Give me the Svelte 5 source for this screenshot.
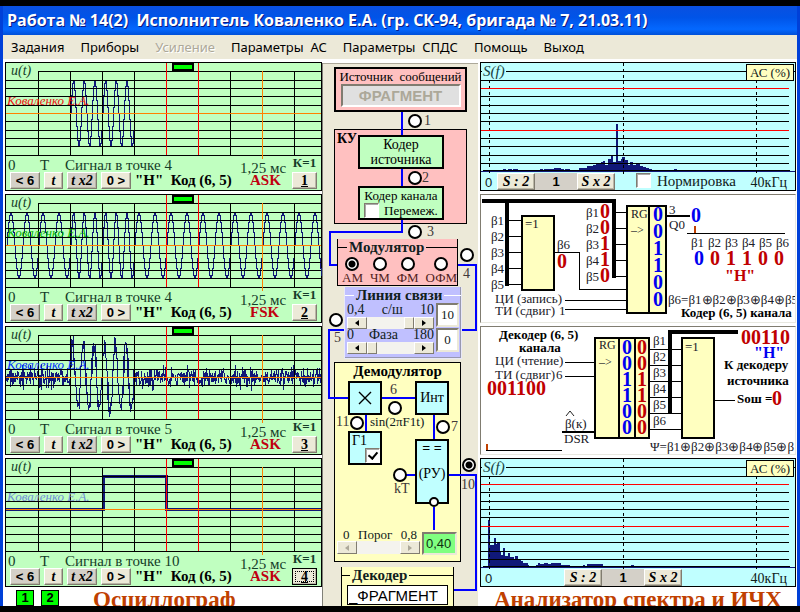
<script>
  const menu = [
    { label: 'Задания' },
    { label: 'Приборы' },
    { label: 'Усиление', disabled: true },
    { label: 'Параметры  АС' },
    { label: 'Параметры  СПДС' },
    { label: 'Помощь' },
    { label: 'Выход' }
  ];

  const PLOT_W = 315;
  const ZERO = 50;
  const AMP = 33;
  const SLOT = 32;

  let seed = 7;
  function random() {
    seed = (seed * 16807) % 2147483647;
    return seed / 2147483647;
  }
  function noise() {
    return (random() + random() + random() - 1.5) * 10;
  }

  // Cycles per bit slot: bits 2 and 3 are ones.
  function sine(x, low) {
    const slot = Math.floor(x / SLOT);
    const cycles = slot === 2 || slot === 3 ? 3 : low;
    return AMP * Math.sin((2 * Math.PI * cycles * (x % SLOT)) / SLOT);
  }

  function trace(from, to, fn) {
    let d = '';
    for (let x = from; x <= to; x += 1) {
      const y = Math.round(ZERO - fn(x)) + 0.5;
      d += d ? `H${x + 0.5}V${y}` : `M${x + 0.5} ${y}`;
    }
    return d;
  }

  // Every column spans the extremes of its own samples, as on a real screen.
  function noisyTrace() {
    let d = '';
    for (let x = 0; x < PLOT_W; x += 1) {
      const base = ZERO - sine(x, 0);
      const a = Math.round(base - noise()) + 0.5;
      const b = Math.round(ZERO - sine(x + 1, 0) + noise()) + 0.5;
      d += `${d ? 'L' : 'M'}${x + 0.5} ${a}V${b}`;
    }
    return d;
  }

  const scopes = [
    { id: 1, point: '4', mode: 'ASK', color: '#f01010', path: trace(64, 128, (x) => sine(Math.min(x, 127.9), 0)) },
    { id: 2, point: '4', mode: 'FSK', color: '#00b400', path: trace(0, PLOT_W, (x) => sine(x, 2)) },
    { id: 3, point: '5', mode: 'ASK', color: '#0030ff', path: noisyTrace() },
    { id: 4, point: '10', mode: 'ASK', color: '#7090d8', path: 'M0 50.5H97.5V17.5H160.5V50.5H315', wide: true, focused: true }
  ];

  const rows = [17, 25, 33, 42, 58, 67, 75, 83, 92];
  const cols = [32, 64, 96, 128, 224, 288];

  const specLines = [17, 33, 42, 50, 58, 75, 83, 92, 100];
  const spectra = [
    {
      id: 'a', start: 12, norm: true,
      bars: [[22, 1, 3], [27, 1, 4], [32, 1, 5], [59, 1, 3], [63, 1, 10], [73, 2, 4], [77, 2, 3], [80, 1, 3], [84, 1, 5], [98, 2, 3], [101, 2, 5], [106, 4, 3], [109, 4, 3], [112, 5, 3], [115, 6, 3], [118, 7, 2], [120, 8, 2], [122, 9, 2], [124, 5, 3], [127, 11, 3], [130, 14, 2], [132, 8, 3], [137, 9, 3], [140, 11, 2], [141, 13, 3], [144, 10, 3], [147, 5, 2], [149, 8, 3], [152, 5, 3], [155, 6, 4], [159, 4, 3], [162, 3, 3], [165, 2, 3], [168, 1, 3], [193, 1, 3], [135, 46, 2]]
    },
    {
      id: 'b', start: 79, norm: false,
      bars: [[7, 46, 2], [9, 21, 4], [13, 28, 2], [15, 22, 1], [16, 24, 3], [19, 15, 1], [20, 11, 2], [22, 18, 2], [24, 10, 3], [27, 13, 2], [29, 9, 2], [31, 9, 2], [33, 6, 1], [34, 10, 3], [37, 6, 3], [40, 5, 2], [42, 3, 5], [47, 1, 1], [55, 1, 2], [57, 3, 2], [59, 2, 4], [63, 3, 4], [67, 2, 3], [70, 3, 10], [80, 1, 9], [102, 1, 2], [106, 2, 16], [150, 1, 3]]
    }
  ];

  // Control points of the block diagram: circle centre and caption anchor.
  const points = [
    { n: '1', x: 92, y: 58, lx: 101, ly: 50 },
    { n: '2', x: 92, y: 115, lx: 99, ly: 107 },
    { n: '3', x: 92, y: 169, lx: 104, ly: 161 },
    { n: '4', x: 144, y: 192, lx: 140, ly: 203 },
    { n: '5', x: 13, y: 257, lx: 11, ly: 267 },
    { n: '6', x: 72, y: 345, lx: 67, ly: 319 },
    { n: '7', x: 120, y: 364, lx: 128, ly: 356 },
    { n: '11', x: 34, y: 360, lx: 13, ly: 351 },
    { n: 'kT', x: 77, y: 412, lx: 71, ly: 418 },
    { n: '10', x: 146, y: 402, lx: 138, ly: 414 }
  ];
  let point = $state('10');
  let modulation = $state('АМ');
  const modes = ['АМ', 'ЧМ', 'ФМ', 'ОФМ'];

  let snr = $state(10);
  let phase = $state(0);
  let threshold = $state('0,40');

  const five = [0, 1, 2, 3, 4];
  const six = [0, 1, 2, 3, 4, 5];
  const word = '001100';
  const info = '00110';
</script>

<div class="window">
  <header>Работа № 14(2)&nbsp; Исполнитель Коваленко Е.А. (гр. СК-94, бригада № 7, 21.03.11)</header>
  <nav>
    {#each menu as m}
      <button type="button" class="menu" disabled={m.disabled}>{m.label}</button>
    {/each}
  </nav>

  <main>
    <section class="left">
      {#each scopes as s}
        <article class="scope">
          <svg class="plot" viewBox="0 0 315 93" preserveAspectRatio="none" shape-rendering="crispEdges" fill="none">
            <path class="wave" class:wide={s.wide} d={s.path} />
            <g stroke="#000">
              <path d="M32 8.5H315" />
              {#each rows as y}<path d="M0 {y + 0.5}H315" />{/each}
              {#each cols as x}<path d="M{x + 0.5} 8V92" />{/each}
            </g>
            <path stroke="#f00" d="M160.5 0V92M192.5 0V92" />
            <g fill="#ff8000">
              <rect x="256" y="8" width="1" height="88" />
              <rect x="0" y="50" width="315" height="1" />
            </g>
            <rect x="167" y="1" width="20" height="6" fill="#0f0" stroke="#000" stroke-width="2" />
          </svg>
          <i class="axis">u(t)</i>
          <i class="author" style:color={s.color}>Коваленко Е.А.</i>
          <div class="readout">
            <div class="main-col">
              <div class="caption">
                <span class="zero">0</span><span class="period">T</span>
                <span class="grow">Сигнал в точке {s.point}</span>
                <span class="time">1,25 мс</span>
              </div>
              <div class="controls">
                <button type="button" class="b w30 dark">&lt; 6</button>
                <button type="button" class="b w18 it">t</button>
                <button type="button" class="b w30 it dark">t x2</button>
                <button type="button" class="b w30">0 &gt;</button>
                <b class="code">"Н"&nbsp; Код (6, 5)</b>
                <b class="mode">{s.mode}</b>
              </div>
            </div>
            <div class="gain">
              <b>К=1</b>
              <button type="button" class="b num" class:focused={s.focused}><u>{s.id}</u></button>
            </div>
          </div>
        </article>
      {/each}
      <footer class="foot-left">
        <button type="button" class="green">1</button>
        <button type="button" class="green">2</button>
        <h2>Осциллограф</h2>
      </footer>
    </section>

    <section class="middle">
      <div class="block source">
        <label for="src">Источник&nbsp; сообщений</label>
        <input id="src" type="text" value="ФРАГМЕНТ" disabled />
      </div>
      <div class="block ku"><b>КУ</b></div>
      <div class="block demod"><b>Демодулятор</b></div>

      <svg class="wires" viewBox="0 0 156 543" fill="none" stroke="#00f" stroke-width="2" shape-rendering="crispEdges">
        <path d="M79 49V73M79 105V124M79 157V169H7V202H14M135 202H153V267H138M21 267H6V335H25M59 335H92M43 351V368M111 351V376M83 412H92M126 412H153V527H131M111 444V467" />
      </svg>

      <div class="block coder">Кодер<br />источника</div>
      <div class="block channel">
        <span>Кодер канала</span>
        <label><input type="checkbox" />Перемеж.</label>
      </div>

      <fieldset class="modulator">
        <legend>Модулятор</legend>
        <div class="modes">
          {#each modes as m}
            <label><input type="radio" name="mod" value={m} bind:group={modulation} />{m}</label>
          {/each}
        </div>
      </fieldset>

      <fieldset class="line">
        <legend>Линия связи</legend>
        <div class="slide-row">
          <div class="slide">
            <div class="scale"><span>0,4</span><label for="snr">с/ш</label><span>10</span></div>
            <div class="bar">
              <button type="button" class="arrow" aria-label="Меньше с/ш"><i class="al"></i></button>
              <input id="snr" type="range" min="0" max="10" bind:value={snr} />
              <button type="button" class="arrow" aria-label="Больше с/ш"><i class="ar"></i></button>
            </div>
          </div>
          <input class="value" type="text" aria-label="с/ш" value={snr} />
        </div>
        <div class="slide-row">
          <div class="slide">
            <div class="scale"><span>0</span><label for="phase">Фаза</label><span>180</span></div>
            <div class="bar">
              <button type="button" class="arrow" aria-label="Меньше фаза"><i class="al"></i></button>
              <input id="phase" type="range" min="0" max="180" bind:value={phase} />
              <button type="button" class="arrow" aria-label="Больше фаза"><i class="ar"></i></button>
            </div>
          </div>
          <input class="value" type="text" aria-label="Фаза" value={phase} />
        </div>
      </fieldset>

      <div class="block cyan mult">
        <svg width="14" height="14" viewBox="0 0 14 14" stroke="#000" stroke-width="1.4"><path d="M1 1L13 13M13 1L1 13" /></svg>
      </div>
      <div class="block cyan integ">Инт</div>
      <div class="block cyan gen">
        <label for="g1">Г1</label><input id="g1" type="checkbox" checked />
      </div>
      <div class="block cyan ru"><b>= =</b><span>(РУ)</span></div>
      <i class="inv"></i>
      <span class="sin">sin(2πF1t)</span>

      {#each points as p}
        <input class="point" type="radio" name="point" id="p{p.n}" value={p.n} bind:group={point} style:left="{p.x}px" style:top="{p.y}px" />
        <label class="pl" for="p{p.n}" style:left="{p.lx}px" style:top="{p.ly}px">{p.n}</label>
      {/each}

      <div class="threshold">
        <div class="tcol">
          <div class="scale"><span>0</span><label for="thr">Порог</label><span>0,8</span></div>
          <div class="bar off">
            <button type="button" class="arrow" disabled aria-label="Порог ниже"><i class="al"></i></button>
            <input id="thr" type="range" disabled />
            <button type="button" class="arrow" disabled aria-label="Порог выше"><i class="ar"></i></button>
          </div>
        </div>
        <input class="thr-value" type="text" aria-label="Порог" bind:value={threshold} />
      </div>

      <fieldset class="decoder">
        <legend>Декодер</legend>
        <input type="text" aria-label="Декодер" value="_ФРАГМЕНТ" />
      </fieldset>
    </section>

    <section class="right">
      {#snippet spectrum(s)}
        <article class="spectrum">
          <svg class="plot" viewBox="0 0 314 110" preserveAspectRatio="none" shape-rendering="crispEdges" fill="none">
            <g fill="#101878">
              {#each s.bars as [x, h, w]}<rect {x} y={107 - h} width={w} height={h} />{/each}
            </g>
            <g stroke="#000">
              <path d="M0 8.5H314" />
              {#each specLines as y}<path d="M0 {y + 0.5}H308" />{/each}
              <path d="M2 107.5H309" /><path stroke="#101878" d="M0 108.5H314" />
              <path stroke-dasharray="3 3" d="M8.5 17V112M142.5 0V112M275.5 17V112" />
            </g>
            <path stroke="#f00" d="M0 25.5H308M0 67.5H308" />
          </svg>
          <i class="sf">S(f)</i>
          <button type="button" class="ac">АС (%)</button>
          <div class="sfoot">
            <span class="sz">0</span>
            <div class="zoomer" style:margin-left="{s.start - 8}px">
              <button type="button" class="b it sbtn">S : 2</button>
              <span class="one">1</span>
              <button type="button" class="b it sbtn">S x 2</button>
            </div>
            {#if s.norm}
              <label class="norm"><input type="checkbox" />Нормировка</label>
            {/if}
            <span class="khz">40кГц</span>
          </div>
        </article>
      {/snippet}

      {@render spectrum(spectra[0])}

      <article class="scheme">
        <svg viewBox="0 0 314 127" preserveAspectRatio="xMinYMin meet">
          <g shape-rendering="crispEdges" fill="none" stroke="#000">
            <path stroke-width="4" d="M1 6H133V83" stroke-linejoin="miter" />
            <path stroke-width="4" d="M26 6V91" />
            {#each five as i}<path d="M27 {25.5 + 16 * i}H40M133 {17.5 + 16 * i}H145" />{/each}
            <path d="M74 57.5H98.5V94.5H145M84 105.5H145M84 114.5H145M206 38.5H304" />
            <path stroke-width="2" d="M186 21H209" />
            <rect x="41" y="21" width="32" height="74" fill="#ffffc0" stroke-width="2" />
            <rect x="146" y="11" width="39" height="107" fill="#ffffc0" stroke-width="2" />
            <path stroke-width="2" d="M168 11V118" />
            <path stroke="#c04000" stroke-width="2" d="M214 31V38" />
          </g>
          <g class="t">
            <text x="44" y="33">=1</text>
            {#each five as i}
              <text x="10" y={30 + 16 * i}>β{i + 1}</text>
              <text x="105" y={22 + 16 * i}>β{i + 1}</text>
            {/each}
            <text x="76" y="54">β6</text>
            <text x="150" y="23" class="mono">RG</text>
            <text x="150" y="39" class="mono">–&gt;</text>
            <text x="188" y="19">3</text>
            <text x="188" y="34">Q0</text>
            {#each six as i}<text x={210 + 17 * i} y="52">β{i + 1}</text>{/each}
            <text x="14" y="108">ЦИ (запись)</text>
            <text x="14" y="120">ТИ (сдвиг)</text>
            <text x="78" y="120">1</text>
            <text x="187" y="109">β6=β1⊕β2⊕β3⊕β4⊕β5</text>
          </g>
          <g class="d">
            {#each five as i}<text class="red" x="119" y={23 + 16 * i}>{info[i]}</text>{/each}
            <text class="red" x="76" y="73">0</text>
            {#each six as i}
              <text class="blue" x="172" y={26 + 17 * i}>{word[i]}</text>
              <text class={i ? 'red' : 'blue'} x={213 + 16 * i} y="70">{word[i]}</text>
            {/each}
            <text class="blue" x="210" y="27">0</text>
          </g>
          <text class="h red" x="244" y="86">"Н"</text>
          <text class="cap" x="200" y="122">Кодер (6, 5) канала</text>
        </svg>
      </article>

      <article class="scheme">
        <svg viewBox="0 0 314 127" preserveAspectRatio="xMinYMin meet">
          <g shape-rendering="crispEdges" fill="none" stroke="#000">
            <path d="M84 35.5H113M84 49.5H113M234 73.5H254M5 123.5H81" />
            {#each six as i}<path d="M169 {22.5 + 16 * i}H200" />{/each}
            <path stroke-width="2" d="M81 105H113" />
            <path stroke-width="4" d="M257 5H189V87" />
            <rect x="114" y="11" width="54" height="100" fill="#ffffc0" stroke-width="2" />
            <path stroke-width="2" d="M138 11V111M154 11V111" />
            <rect x="201" y="11" width="32" height="100" fill="#ffffc0" stroke-width="2" />
            <path stroke="#c04000" stroke-width="2" d="M6 117V123" />
          </g>
          <path d="M85 89L89 84L93 89" fill="none" stroke="#222" />
          <g class="t">
            <text x="14" y="38">ЦИ (чтение)</text>
            <text x="14" y="52">ТИ (сдвиг)</text>
            <text x="75" y="52">6</text>
            <text x="118" y="22" class="mono">RG</text>
            <text x="118" y="39" class="mono">–&gt;</text>
            {#each six as i}<text x="172" y={18 + 16 * i}>β{i + 1}</text>{/each}
            <text x="204" y="24">=1</text>
            <text x="84" y="101">β(к)</text>
            <text x="83" y="116">DSR</text>
            <text x="169" y="124">Ψ=β1⊕β2⊕β3⊕β4⊕β5⊕β</text>
          </g>
          <g class="d">
            {#each six as i}
              <text class="blue" x="141" y={27 + 16 * i}>{word[i]}</text>
              <text class="red" x="156" y={27 + 16 * i}>{word[i]}</text>
            {/each}
            <text class="red" x="6" y="68">001100</text>
            <text class="red" x="260" y="17">00110</text>
            <text class="red" x="291" y="78">0</text>
          </g>
          <text class="h blue" x="273" y="31">"Н"</text>
          <g class="cap">
            <text x="18" y="12">Декодер (6, 5)</text>
            <text x="38" y="25">канала</text>
            <text x="243" y="42">К декодеру</text>
            <text x="246" y="58">источника</text>
            <text x="256" y="76">Sош =</text>
          </g>
        </svg>
      </article>

      {@render spectrum(spectra[1])}

      <footer class="foot-right"><h2>Анализатор спектра и ИЧХ</h2></footer>
    </section>
  </main>
</div>

<style>
  :global(body) { background: #000; }
  * { box-sizing: border-box; }
  button, input, fieldset, legend, h2 { margin: 0; padding: 0; border: 0; font: inherit; color: inherit; border-radius: 0; }
  input { appearance: none; min-width: 0; }

  .window {
    margin: 6px 0;
    border: solid #0040d8;
    border-width: 0 3px;
    background: #fff;
    font-family: "Liberation Serif", "Times New Roman", serif;
    font-size: 14px;
    color: #102020;
    overflow: hidden;
  }
  header {
    height: 29px;
    margin: 0 -3px;
    padding-left: 7px;
    background: linear-gradient(#0a50e0, #0054e8 40%, #0468ff 80%, #0050d8);
    color: #fff;
    font: bold 16px/28px "Open Sans", "Noto Sans", sans-serif;
    text-shadow: 1px 1px #0a1883;
    white-space: pre;
    overflow: hidden;
  }
  nav {
    display: flex;
    gap: 16px;
    height: 24px;
    padding-left: 8px;
    background: #ece9d8;
    font: 13px/24px "Noto Sans", sans-serif;
    color: #000;
  }
  .menu { background: none; white-space: pre; }
  .menu:disabled { color: #aca899; text-shadow: 1px 1px #fff; }

  main { display: grid; grid-template-columns: 319fr 157px 318fr; padding-top: 3px; }
  .left, .right { display: flex; flex-direction: column; gap: 3px; min-width: 0; }
  .left { padding-left: 2px; }
  .right { padding: 0 1px; }

  .scope, .spectrum { position: relative; height: 129px; border: 1px solid #000; white-space: nowrap; }
  .scope { background: #c0ffc0; }
  .spectrum { background: #c0ffff; }
  .plot { display: block; width: 100%; height: 93px; overflow: visible; }
  .spectrum .plot { height: 110px; }
  .wave { stroke: #101878; }
  .wave.wide { stroke-width: 3; }
  .axis { position: absolute; left: 5px; top: -1px; font-size: 14px; line-height: 17px; color: #143c28; }
  .author { position: absolute; left: 1px; top: 30px; font-size: 13px; line-height: 16px; }

  .readout { display: flex; padding: 0 4px 0 2px; }
  .main-col { flex: 1; }
  .caption { display: flex; height: 16px; line-height: 18px; font-size: 15px; color: #143c28; }
  .zero { width: 32px; }
  .period { width: 25px; }
  .grow { flex: 1; }
  .time { width: 52px; line-height: 24px; }
  .controls { display: flex; gap: 4px; height: 17px; padding-left: 2px; line-height: 17px; }
  .code { flex: 1; font-size: 15px; color: #000; }
  .mode { width: 42px; color: #c00010; font-size: 15px; }
  .gain { width: 25px; font-size: 13px; color: #143c28; text-align: center; line-height: 14px; }
  .gain b { display: block; height: 16px; }

  .b {
    height: 17px;
    background: #ece9d8;
    border: 1px solid;
    border-color: #fff #807c70 #807c70 #fff;
    box-shadow: inset -1px -1px #bab6a6;
    font: bold 13px/14px "Liberation Sans", Arial, sans-serif;
    color: #000;
    text-align: center;
  }
  .b.dark { background: #d4d0c8; }
  .b.it { font: italic bold 14px/14px "Liberation Serif", serif; }
  .w30 { width: 30px; }
  .w18 { width: 19px; }
  .num { width: 25px; font: bold 14px/14px "Liberation Serif", serif; }
  .num.focused { border: 1px solid #000; outline: 1px dotted #000; outline-offset: -4px; }

  footer { display: flex; height: 16px; overflow: hidden; }
  h2 { font-size: 23px; line-height: 20px; font-weight: bold; color: #c04000; white-space: nowrap; }
  .foot-left { gap: 7px; padding-left: 11px; }
  .foot-left h2 { margin-left: 27px; }
  .foot-right { padding-left: 14px; }
  .green { width: 18px; height: 16px; background: #0f0; border: 1px solid #000; color: #000; font: bold 13px/14px "Liberation Sans", Arial, sans-serif; }

  .middle {
    position: relative;
    height: 543px;
    margin-top: 1px;
    background: #ece9d8;
    border-left: 1px solid #808078;
    border-right: 1px solid #fff;
    box-shadow: inset 0 1px #aca899;
    overflow: hidden;
    white-space: nowrap;
  }
  .wires { position: absolute; left: 0; top: 0; width: 156px; height: 543px; }
  .block { position: absolute; border: 2px solid #000; text-align: center; color: #000; }
  .source { left: 11px; top: 4px; width: 133px; height: 45px; border-width: 2px; background: #ffc0c0; font-size: 13px; line-height: 14px; }
  .source label { display: block; padding-top: 1px; }
  .source input {
    width: 120px; height: 23px; background: #e0e0e0; border: 2px solid; border-color: #807c70 #fff #fff #807c70;
    color: #aca899; text-align: center; font: bold 15px "Liberation Sans", Arial, sans-serif;
  }
  .ku { left: 11px; top: 66px; width: 133px; height: 95px; border-width: 1px; background: #ffc0c0; text-align: left; padding-left: 2px; font-size: 14px; line-height: 18px; }
  .coder { left: 35px; top: 72px; width: 86px; height: 34px; background: #c0ffc0; line-height: 15px; }
  .channel { left: 35px; top: 123px; width: 86px; height: 34px; background: #c0ffc0; line-height: 15px; font-size: 13px; }
  .channel label { display: flex; gap: 5px; padding-left: 4px; }
  input[type="checkbox"] { width: 15px; height: 15px; background: #fff; border: 1px solid; border-color: #807c70 #fff #fff #807c70; box-shadow: inset 1px 1px #aaa; flex: none; }

  input[type="radio"] { width: 14px; height: 14px; border: 2px solid #000; border-radius: 50%; background: #fff; }
  input[type="radio"]:checked { background: radial-gradient(#000 3px, #fff 4px); }
  .point { position: absolute; transform: translate(-50%, -50%); }
  .pl { position: absolute; line-height: 16px; color: #403838; }

  legend { font-weight: bold; font-size: 15px; line-height: 16px; color: #102020; padding: 0 2px; }
  .modulator { position: absolute; left: 14px; top: 176px; width: 121px; height: 47px; }
  .modulator { background: #ffc0c0; border: 1px solid #000; border-top: 0; }
  .modulator::before { content: ""; position: absolute; left: 0; right: 0; top: 8px; border-top: 1px solid #000; }
  .modulator legend, .decoder legend { position: relative; float: left; margin-left: 9px; }
  .modulator legend { background: #ffc0c0; }
  .modes { position: absolute; left: 4px; right: 0; top: 18px; display: flex; justify-content: space-between; font-size: 13px; line-height: 13px; color: #502020; }
  .modes label { display: flex; flex-direction: column; align-items: center; }

  .line { position: absolute; left: 21px; top: 224px; width: 117px; height: 72px; background: #c0c0ff; border: 1px solid #e8e8f8; border-top: 0; padding: 0 2px; box-shadow: inset -1px -1px #9898b0; }
  .line::before { content: ""; position: absolute; left: 0; right: 0; top: 8px; border-top: 1px solid #fff; }
  .line legend { position: relative; float: left; margin-left: 7px; background: #c0c0ff; }
  .slide-row { clear: both; display: flex; gap: 2px; height: 25px; }
  .slide { width: 87px; }
  .scale { display: flex; justify-content: space-between; height: 14px; line-height: 14px; }
  .bar { display: flex; height: 12px; background: #f4f3ee; }
  .arrow { display: flex; align-items: center; justify-content: center; width: 20px; flex: none; background: #ece9d8; border: 1px solid; border-color: #fff #807c70 #807c70 #fff; }
  .al, .ar { border: solid transparent; border-width: 3px 0; }
  .al { border-right: 4px solid #000; }
  .ar { border-left: 4px solid #000; }
  .off .al { border-right-color: #aca899; }
  .off .ar { border-left-color: #aca899; }
  .bar input { flex: 1; width: 10px; height: 100%; background: transparent; }
  .bar input::-webkit-slider-thumb { appearance: none; width: 10px; height: 12px; background: #ece9d8; border: 1px solid; border-color: #fff #807c70 #807c70 #fff; }
  .off input::-webkit-slider-thumb { opacity: 0; }
  .value { width: 23px; height: 24px; background: #fff; border: 2px solid; border-color: #807c70 #ece9d8 #ece9d8 #807c70; text-align: center; font-size: 13px; }

  .demod { left: 11px; top: 299px; width: 127px; height: 200px; border-width: 1px; background: #ffffc0; font-size: 15px; line-height: 16px; }
  .cyan { background: #c0ffff; width: 34px; height: 34px; }
  .mult { left: 25px; top: 318px; display: flex; align-items: center; justify-content: center; }
  .integ { left: 92px; top: 318px; line-height: 30px; }
  .gen { left: 25px; top: 368px; }
  .gen label { position: absolute; left: 2px; top: 0; line-height: 16px; }
  .gen input { position: absolute; right: 0; bottom: 0; }
  .gen input:checked::after { content: ""; position: absolute; left: 4px; top: 1px; width: 4px; height: 7px; border: solid #000; border-width: 0 2px 2px 0; transform: rotate(40deg); }
  .ru { left: 92px; top: 376px; height: 65px; display: flex; flex-direction: column; gap: 9px; line-height: 16px; align-items: center; }
  .inv { position: absolute; left: 106px; top: 434px; width: 10px; height: 10px; border: 2px solid #000; border-radius: 50%; background: #fff; }
  .sin { position: absolute; left: 47px; top: 351px; line-height: 15px; font-size: 13px; }

  .threshold { position: absolute; left: 14px; top: 469px; display: flex; gap: 2px; }
  .tcol { width: 83px; }
  .threshold .scale { padding: 0 3px 0 6px; font-size: 13px; }
  .threshold .scale { height: 9px; line-height: 6px; }
  .threshold .bar { height: 13px; }
  .thr-value { width: 35px; height: 23px; background: #80ff80; border: 2px solid; border-color: #807c70 #ece9d8 #ece9d8 #807c70; padding-left: 2px; font: 13px "Liberation Sans", Arial, sans-serif; color: #103010; }

  .decoder { position: absolute; left: 18px; top: 504px; width: 113px; height: 42px; background: #ffffc0; border: 1px solid #000; border-top: 0; padding-left: 5px; }
  .decoder::before { content: ""; position: absolute; left: 0; right: 0; top: 8px; border-top: 1px solid #000; }
  .decoder legend { margin-left: 3px; background: #ffffc0; }
  .decoder input { display: block; clear: both; position: relative; top: 2px; width: 101px; height: 20px; border: 1px solid #000; background: #fff; padding-left: 1px; font: 15px/18px "Liberation Sans", Arial, sans-serif; color: #000; }

  .sf { position: absolute; left: 1px; top: 0; padding: 0 1px; background: #c0ffff; line-height: 16px; font-size: 15px; color: #143c40; }
  .ac { position: absolute; right: 1px; top: 1px; width: 48px; height: 17px; background: #ffffc0; border: 1px solid #000; font-size: 13px; line-height: 14px; }
  .sfoot { position: relative; display: flex; height: 17px; line-height: 17px; padding-left: 4px; }
  .sz { width: 8px; font: 13px/20px "Liberation Sans", Arial, sans-serif; }
  .zoomer { display: flex; background: #d4d0c8; }
  .zoomer .sbtn { width: 38px; }
  .one { width: 42px; text-align: center; font: bold 13px/17px "Liberation Sans", Arial, sans-serif; color: #000; }
  .norm { display: flex; gap: 6px; margin-left: 21px; font-size: 15px; }
  .khz { margin-left: auto; padding-right: 8px; line-height: 20px; }

  .scheme { height: 129px; border: 1px solid; border-color: #807c70 #e8e8e0 #e8e8e0 #807c70; background: #fff; overflow: hidden; }
  .scheme svg { display: block; width: 100%; height: 127px; }
  .t { font-size: 13px; fill: #202028; }
  .mono { font-size: 12px; }
  .d { font-size: 20px; font-weight: bold; }
  .h { font-size: 16px; font-weight: bold; }
  .cap { font-size: 13px; font-weight: bold; fill: #000; }
  .red { fill: #c00000; }
  .blue { fill: #0000f0; }
</style>
